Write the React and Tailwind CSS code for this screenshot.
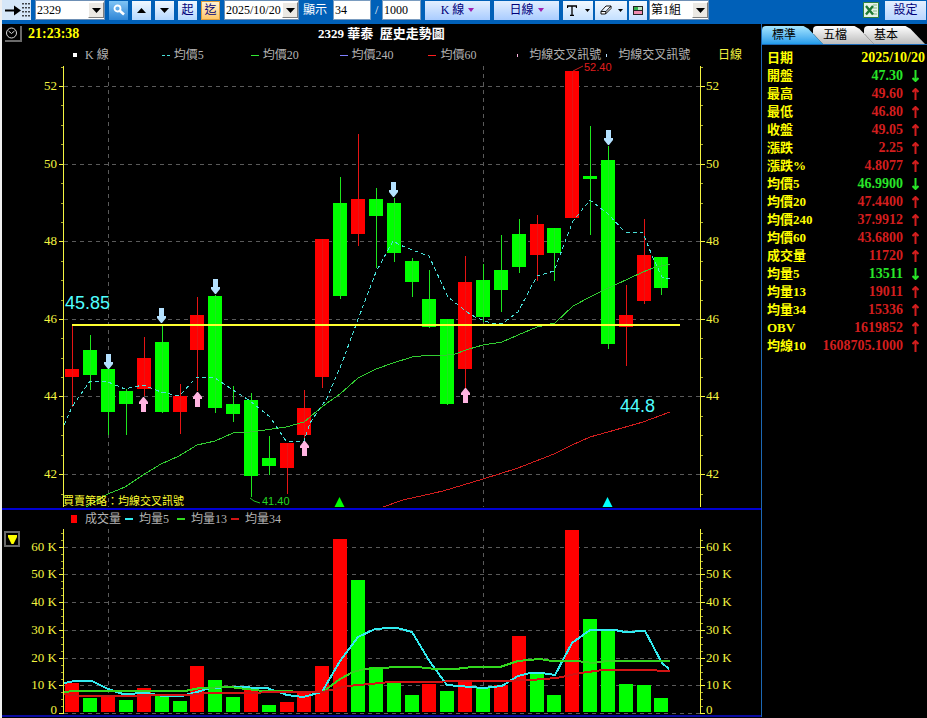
import clsx from "clsx";

const RED = "#ff0000";
const GREEN = "#00ff00";

// high, body top, body bottom, low
const candles = [
  ["r", 325, 369, 377, 407],
  ["g", 335, 350, 375, 390],
  ["g", 369, 369, 412, 435],
  ["g", 389, 391, 404, 435],
  ["r", 337, 358, 389, 396],
  ["g", 325, 342, 412, 413],
  ["r", 384, 396, 412, 434],
  ["r", 297, 315, 350, 391],
  ["g", 295, 296, 408, 413],
  ["g", 386, 404, 414, 422],
  ["g", 393, 400, 476, 497],
  ["g", 436, 458, 466, 475],
  ["r", 443, 443, 468, 494],
  ["r", 390, 408, 435, 440],
  ["r", 239, 239, 377, 388],
  ["g", 177, 203, 296, 299],
  ["r", 134, 199, 234, 246],
  ["g", 188, 199, 216, 268],
  ["g", 198, 203, 253, 262],
  ["g", 258, 261, 282, 297],
  ["g", 270, 299, 327, 328],
  ["g", 319, 319, 404, 405],
  ["r", 256, 282, 369, 388],
  ["g", 264, 280, 317, 322],
  ["g", 235, 270, 290, 312],
  ["g", 219, 234, 267, 273],
  ["r", 215, 224, 255, 281],
  ["g", 228, 228, 253, 281],
  ["r", 71, 71, 218, 218],
  ["g", 126, 176, 179, 235],
  ["g", 146, 160, 344, 349],
  ["r", 285, 315, 327, 366],
  ["r", 219, 255, 301, 304],
  ["g", 257, 257, 288, 295],
];

const volumes = [
  ["r", 683], ["g", 698], ["r", 695], ["g", 700], ["r", 688], ["g", 696], ["g", 701],
  ["r", 666], ["g", 680], ["g", 697], ["r", 690], ["g", 705], ["r", 702], ["r", 693],
  ["r", 666], ["r", 539], ["g", 580], ["g", 667], ["g", 682], ["g", 695], ["r", 684],
  ["g", 691], ["r", 682], ["g", 687], ["r", 685], ["r", 636], ["g", 673], ["g", 695],
  ["r", 530], ["g", 619], ["g", 629], ["g", 684], ["g", 685], ["g", 698],
];

const ma5 = "64,425 72,407 90,381 108,382 125,389 143,385 161,392 179,396 197,377 215,378 233,390 250,401 270,417 286,441 304,441 310,423 327,398 342,363 357,322 376,272 393,241 400,245 412,250 429,256 448,297 467,312 475,317 483,320 490,323 503,323 518,312 537,276 554,271 565,242 573,221 590,200 608,214 625,232 643,233 653,258 662,277 670,279";
const ma20 = "86,507 108,494 125,487 143,475 161,464 179,456 197,445 215,441 233,433 250,432 258,431 286,427 304,422 323,406 340,394 358,378 376,369 393,363 412,357 430,355 439,356 455,354 469,349 483,345 502,342 518,335 537,327 555,323 573,306 590,297 602,291 615,285 643,272 653,268 670,264";
const ma60 = "383,507 403,500 443,491 483,479 518,468 554,454 572,445 590,437 608,432 643,422 670,412";

const vol5 = "64,683 75,681 92,681 108,689 123,694 148,693 162,696 182,696 197,692 210,688 233,687 267,688 287,695 303,697 322,692 340,661 358,637 375,629 390,628 397,628 412,632 430,662 447,685 483,688 502,686 518,676 530,673 542,673 555,675 572,643 590,630 615,630 625,632 645,631 662,663 669,669";
const vol13 = "64,692 75,691 185,691 200,688 230,687 263,691 323,692 340,679 353,672 365,669 397,667 418,667 435,669 455,669 473,667 500,667 518,661 540,659 552,661 577,661 593,663 607,661 670,661";
const vol34 = "64,694 80,696 110,696 190,695 203,693 323,692 347,686 370,684 390,682 500,681 530,680 557,678 580,673 603,670 643,670 670,671";

const quotes = [
  ["開盤", "47.30", "down"],
  ["最高", "49.60", "up"],
  ["最低", "46.80", "up"],
  ["收盤", "49.05", "up"],
  ["漲跌", "2.25", "up"],
  ["漲跌%", "4.8077", "up"],
  ["均價5", "46.9900", "down"],
  ["均價20", "47.4400", "up"],
  ["均價240", "37.9912", "up"],
  ["均價60", "43.6800", "up"],
  ["成交量", "11720", "up"],
  ["均量5", "13511", "down"],
  ["均量13", "19011", "up"],
  ["均量34", "15336", "up"],
  ["OBV", "1619852", "up"],
  ["均線10", "1608705.1000", "up"],
];

const barX = (i) => Math.round(72.4 + i * 17.85);
const color = (c) => (c === "r" ? RED : GREEN);

function Combo({ label, options, className }) {
  return (
    <div className={clsx("relative h-5 shrink-0 border border-[#6d8fb5] bg-white", className)}>
      <select aria-label={label} className="block h-full w-full appearance-none bg-white pl-px text-xs text-black outline-none">
        {options.map((o) => <option key={o}>{o}</option>)}
      </select>
      <span className="pointer-events-none absolute inset-y-px right-0 flex w-4 items-center justify-center border border-t-white border-r-[#808080] border-b-[#808080] border-l-white bg-[#ece9e4]">
        <svg width="9" height="5" viewBox="0 0 9 5"><path d="M0 0h9L4.500 5z" fill="#000" /></svg>
      </span>
    </div>
  );
}

function ToolButton({ label, className, children }) {
  return (
    <button aria-label={label} className={clsx("flex h-[19px] shrink-0 items-center justify-center", className || "w-[19px] bg-linear-to-b from-[#f2f9ff] to-[#b4d8ff]")}>
      {children}
    </button>
  );
}

function Toolbar() {
  return (
    <div className="flex h-6 items-center gap-1 bg-[#0060b8] pr-px pb-1 text-xs text-[#00007a]">
      <div className="flex h-5 w-[29px] shrink-0 items-center bg-[#d6e7f8]">
        <svg width="28" height="20" viewBox="0 0 28 20">
          <path d="M3 10.500h11" stroke="#000" strokeWidth="2" />
          <path d="M12 5.500l7 5-7 5z" fill="#000" />
          <path d="M21 3v16M24 3v16M27 3v16" stroke="#111" strokeWidth="1.500" strokeDasharray="1.500 2.500" />
        </svg>
      </div>
      <Combo label="股票代號" options={["2329"]} className="w-[70px]" />
      <ToolButton label="搜尋" className="w-[19px] bg-linear-to-b from-[#7ec4f5] to-[#2f86d6]">
        <svg width="12" height="12" viewBox="0 0 12 12" fill="none" stroke="#fff">
          <circle cx="4.500" cy="4.500" r="3" strokeWidth="1.800" />
          <path d="M6.800 6.800L11 10.500" strokeWidth="2.600" />
        </svg>
      </ToolButton>
      <ToolButton label="上一檔">
        <svg width="9" height="5" viewBox="0 0 9 5"><path d="M0 5h9L4.500 0z" fill="#000" /></svg>
      </ToolButton>
      <ToolButton label="下一檔">
        <svg width="9" height="5" viewBox="0 0 9 5"><path d="M0 0h9L4.500 5z" fill="#000" /></svg>
      </ToolButton>
      <ToolButton>起</ToolButton>
      <ToolButton className="w-[19px] border border-[#e0a040] bg-linear-to-b from-[#fff3d6] to-[#ffc766]">迄</ToolButton>
      <Combo label="日期" options={["2025/10/20"]} className="w-[75px]" />
      <label htmlFor="bars" className="w-[26px] shrink-0 text-white">顯示</label>
      <input id="bars" defaultValue="34" className="h-5 w-[38px] shrink-0 border border-[#7a9cc0] bg-white px-px text-black outline-none" />
      <span className="w-[3px] shrink-0 text-white">/</span>
      <input aria-label="總筆數" defaultValue="1000" className="h-5 w-[39px] shrink-0 border border-[#7a9cc0] bg-white px-px text-black outline-none" />
      {["K 線", "日線"].map((t) => (
        <ToolButton key={t} className="w-[65px] gap-1 bg-linear-to-b from-[#e3efff] to-[#a9ccff]">
          {t}
          <svg width="6" height="4" viewBox="0 0 6 4"><path d="M0 0h6L3 4z" fill="#a020b0" /></svg>
        </ToolButton>
      ))}
      <div className="flex shrink-0 items-center gap-0.5">
        <ToolButton label="文字" className="w-[30px] gap-2 bg-linear-to-b from-[#f2f9ff] to-[#c4e0ff]">
          <svg width="10" height="11" viewBox="0 0 10 11"><path d="M.500 3V1h9v2M5 1v9M3 10.500h4" fill="none" stroke="#000" strokeWidth="1.300" /></svg>
          <svg width="5" height="3" viewBox="0 0 5 3"><path d="M0 0h5L2.500 3z" fill="#000" /></svg>
        </ToolButton>
        <ToolButton label="清除" className="w-[32px] gap-1.5 bg-linear-to-b from-[#f2f9ff] to-[#c4e0ff]">
          <svg width="12" height="10" viewBox="0 0 12 10">
            <path d="M1 6.500L6 1h5L6 6.500zM1 6.500V9h4.500L11 3.500V1M6 6.500L5.500 9" fill="#fff" stroke="#111" strokeLinejoin="round" />
          </svg>
          <svg width="5" height="3" viewBox="0 0 5 3"><path d="M0 0h5L2.500 3z" fill="#000" /></svg>
        </ToolButton>
        <ToolButton label="儲存" className="w-[18px] bg-linear-to-b from-[#f2f9ff] to-[#c4e0ff]">
          <svg width="10" height="9" viewBox="0 0 10 9">
            <path d="M0 0h10v9H0z" fill="#222" />
            <path d="M1 1h4v3H1z" fill="#2fae4a" />
            <path d="M5 1h4v3H5z" fill="#bfe8c4" />
            <path d="M1 5h8v3H1z" fill="#f08cb0" />
          </svg>
        </ToolButton>
        <Combo label="組別" options={["第1組"]} className="w-[60px]" />
      </div>
      <button aria-label="匯出 Excel" className="mr-0.5 ml-auto shrink-0">
        <svg width="16" height="16" viewBox="0 0 16 16">
          <path d="M.500.500h15v15H.500z" fill="#e6f3e6" stroke="#2f8040" />
          <path d="M10 3h4M10 6h4M10 9h4M10 12h4" stroke="#7fb98a" />
          <path d="M3 4l7 8.500M10 4l-7 8.500" stroke="#1f7a35" strokeWidth="2.400" />
        </svg>
      </button>
      <ToolButton className="w-[41px] bg-linear-to-b from-[#e3efff] to-[#b9d6ff]">設定</ToolButton>
    </div>
  );
}

// labelMax keeps the lowest label inside the drawing
function Axes({ top, bottom, ticks, minor, labelMax }) {
  return (
    <g>
      <g stroke="#5a5a5a" strokeDasharray="4 4">
        {ticks.map(([t, y]) => <path key={t} d={`M64 ${y + 0.5}H700`} />)}
        <path d={`M108.500 ${top}V${bottom}M483.500 ${top}V${bottom}`} />
      </g>
      <g stroke="#f4f440">
        <path d={`M63.500 ${top}V${bottom}M700.500 ${top}V${bottom}`} />
        {ticks.map(([t, y]) => <path key={t} d={`M59 ${y + 0.5}h5M700 ${y + 0.5}h5`} />)}
        {minor.map((y) => <path key={y} d={`M61 ${y + 0.5}h2M701 ${y + 0.5}h2`} opacity=".7" />)}
      </g>
      <g fill="#f4f440" fontSize="13">
        {ticks.map(([t, y]) => (
          <g key={t}>
            <text x="57" y={Math.min(y + 4, labelMax)} textAnchor="end">{t}</text>
            <text x="706" y={Math.min(y + 4, labelMax)}>{t}</text>
          </g>
        ))}
      </g>
    </g>
  );
}

function PriceChart() {
  const ticks = [["52", 86], ["50", 164], ["48", 241], ["46", 319], ["44", 396], ["42", 474]];
  const minor = [67, 105, 125, 144, 183, 203, 222, 261, 280, 300, 338, 358, 377, 416, 435, 455, 494];
  return (
    <svg viewBox="2 62 759 446" className="block h-auto w-full" role="img" aria-label="K線圖">
      <Axes top={66} bottom={507} ticks={ticks} minor={minor} labelMax={505} />
      {candles.map(([c, high, top, bottom, low], i) => (
        <g key={i} fill={color(c)}>
          <rect x={barX(i) - 7} y={top} width="14" height={bottom - top} />
          <rect x={barX(i)} y={high} width="1" height={low - high} fill={c === "r" ? "#e61414" : "#1ee61e"} />
        </g>
      ))}
      <g fill="none" shapeRendering="crispEdges">
        <polyline points={ma20} stroke="#32cd32" />
        <polyline points={ma60} stroke="#d21e1e" />
        <polyline points={ma5} stroke="#48e0d8" strokeDasharray="4 3" />
      </g>
      <path d="M72 325H680" stroke="#ffff30" strokeWidth="2" />

      {/* sell / buy signals */}
      {[[108, 354], [161, 308], [215, 279], [393, 182], [608, 130]].map(([x, y]) => (
        <path key={x} d={`M${x - 2} ${y}h5v8h2v2l-4 5h-1l-4-5v-2h2z`} fill="#b4e1ff" />
      ))}
      {[[143, 397], [197, 392], [304, 441], [465, 388]].map(([x, y]) => (
        <path key={x} d={`M${x} ${y}h1l4 5v2h-2v8h-5v-8h-2v-2z`} fill="#ffb4e1" />
      ))}
      <path d="M339.500 497l5 10h-10z" fill={GREEN} />
      <path d="M607.500 497l5 10h-10z" fill="#00ffff" />

      <g className="font-['Liberation_Sans',sans-serif]">
        <path d="M250 498l4 3 6 2" fill="none" stroke="#22c422" />
        <text x="262" y="505" fontSize="11" fill="#22d422">41.40</text>
        <path d="M573 71l10-5" stroke="#c81e1e" />
        <text x="584" y="71" fontSize="11" fill="#e01e1e">52.40</text>
        <text x="65" y="309" fontSize="18" fill="#50ffff">45.85</text>
        <text x="620" y="412" fontSize="18" fill="#50ffff">44.8</text>
      </g>
      <text x="63" y="505" fontSize="11" fill="#ffff30">買賣策略：均線交叉訊號</text>
    </svg>
  );
}

function VolumeChart() {
  const ticks = [["60 K", 547], ["50 K", 574], ["40 K", 602], ["30 K", 630], ["20 K", 658], ["10 K", 685], ["0", 713]];
  const minor = [533, 540, 554, 561, 568, 581, 588, 595, 609, 616, 623, 637, 644, 651, 665, 672, 679, 692, 699, 706];
  return (
    <svg viewBox="2 527 759 188" className="block h-auto w-full overflow-visible" role="img" aria-label="成交量">
      <Axes top={529} bottom={714} ticks={ticks} minor={minor} labelMax={714} />
      {volumes.map(([c, top], i) => (
        <rect key={i} x={barX(i) - 7} y={top} width="14" height={712 - top} fill={color(c)} />
      ))}
      <g fill="none" strokeWidth="2" shapeRendering="crispEdges">
        <polyline points={vol5} stroke="#32ebf0" />
        <polyline points={vol13} stroke="#32d71e" />
        <polyline points={vol34} stroke="#d21414" />
      </g>
    </svg>
  );
}

function PriceLegend() {
  const items = [
    ["K 線", "h-1 w-1 bg-white"],
    ["均價5", "h-0 w-2 border-t border-dashed border-[#48e0d8]"],
    ["均價20", "h-px w-2 bg-[#32e632]"],
    ["均價240", "h-px w-2 bg-[#8080ff]"],
    ["均價60", "h-px w-2 bg-[#ff1e1e]"],
    ["均線交叉訊號", "h-[3px] w-px bg-[#ffb4e1]"],
    ["均線交叉訊號", "h-[3px] w-px bg-[#b4e1ff]"],
  ];
  return (
    <div className="flex h-[18px] items-center pt-1 pr-[19px] pl-[71px] text-xs whitespace-nowrap text-[#b4b4b4]">
      {items.map(([name, mark], i) => (
        <div key={i} className="flex min-w-0 flex-1 items-center">
          <span className="flex w-3 shrink-0"><i className={mark} /></span>
          {name}
        </div>
      ))}
      <span className="ml-[23px] text-[#f4f440]">日線</span>
    </div>
  );
}

function VolumeLegend() {
  return (
    <div className="flex h-[17px] items-center gap-3 pl-[69px] text-xs text-[#b4b4b4]">
      <span className="-mr-2 flex items-center gap-2"><i className="h-2 w-1.5 bg-[#ff0000]" />成交量</span>
      <span className="-mr-1 flex items-center gap-1.5"><i className="h-0.5 w-2 bg-[#32ebf0]" />均量5</span>
      <span className="-mr-2 flex items-center gap-1.5"><i className="h-0.5 w-2 bg-[#32d71e]" />均量13</span>
      <span className="flex items-center gap-1.5"><i className="h-0.5 w-2 bg-[#d21414]" />均量34</span>
    </div>
  );
}

function Tabs() {
  return (
    <div className="flex h-[21px] items-end border-b border-[#1c68b4] text-xs text-black">
      <button className="relative z-10 h-[18px] w-[61px] rounded-tl bg-linear-to-b from-[#a4e6ff] to-[#1f9cea] pl-2.5 text-left [clip-path:polygon(0_0,68%_0,76%_15%,100%_100%,0_100%)]">標準</button>
      <button className="-ml-2.5 h-[18px] w-[61px] rounded-tl bg-linear-to-b from-white to-[#bcbcbc] pl-2.5 text-left [clip-path:polygon(0_0,68%_0,76%_15%,100%_100%,16%_100%,0_40%)]">五檔</button>
      <button className="-ml-2.5 h-[18px] w-[61px] rounded-tl bg-linear-to-b from-white to-[#bcbcbc] pl-2.5 text-left [clip-path:polygon(0_0,68%_0,76%_15%,100%_100%,16%_100%,0_40%)]">基本</button>
    </div>
  );
}

function QuotePanel() {
  return (
    <div className="w-[166px] shrink-0 border-l border-[#1c68b4]">
      <Tabs />
      <table className="mt-1 w-full text-sm font-bold">
        <tbody>
          <tr className="h-[18px] leading-[18px] text-[#ffff00]">
            <th className="pl-[5px] text-left text-[13px]">日期</th>
            <td colSpan={2} className="pr-0.5 text-right">2025/10/20</td>
          </tr>
          {quotes.map(([name, value, dir]) => (
            <tr key={name} className={clsx("h-[18px] leading-[18px]", dir === "up" ? "text-[#d21e1e]" : "text-[#28e628]")}>
              <th className="pl-[5px] text-left text-[13px] whitespace-nowrap text-[#ffff00]">{name}</th>
              <td className="text-right">{value}</td>
              <td className="w-6 pl-[9px]">
                <svg width="7" height="12" viewBox="0 0 7 12" className={clsx("block", dir === "down" && "rotate-180")}>
                  <path d="M3.500 1v11M.500 4L3.500 1l3 3" fill="none" stroke="currentColor" strokeWidth="2" />
                </svg>
              </td>
            </tr>
          ))}
        </tbody>
      </table>
    </div>
  );
}

export default function App() {
  return (
    <div className="min-h-screen border-l-2 border-[#f0f0f0] bg-black font-['Liberation_Serif','Noto_Sans_CJK_TC',serif]">
      <Toolbar />
      <div className="flex">
        <div className="min-w-0 flex-1">
          <div className="grid h-5 grid-cols-[1fr_auto_1fr] items-center">
            <div className="flex items-center gap-1.5 pl-[3px] text-sm font-bold text-[#ffff00]">
              <button aria-label="時間" className="h-4 w-[17px] border-r-2 border-b-2 border-[#6a6a6a]">
                <svg width="13" height="13" viewBox="0 0 13 13">
                  <circle cx="6.500" cy="6" r="5" fill="none" stroke="#d8d8d8" />
                  <path d="M3.500 4l3 2.500 3-2.500" fill="none" stroke="#d8d8d8" />
                </svg>
              </button>
              21:23:38
            </div>
            <h1 className="text-[13px] font-bold whitespace-pre text-white">{"2329 華泰  歷史走勢圖"}</h1>
          </div>
          <PriceLegend />
          <PriceChart />
          <div className="h-0.5 bg-[#0000d2]" />
          <VolumeLegend />
          <div className="relative">
            <VolumeChart />
            <button aria-label="指標選單" className="absolute top-1 left-0.5 flex h-4 w-4 items-center justify-center border-2 border-[#6a6a6a]">
              <svg width="9" height="9" viewBox="0 0 9 9"><path d="M0 0h9v2L5.500 9h-2L0 2z" fill="#ffff00" /></svg>
            </button>
          </div>
          <div className="h-0.5 bg-[#0a0aa0]" />
        </div>
        <QuotePanel />
      </div>
    </div>
  );
}
